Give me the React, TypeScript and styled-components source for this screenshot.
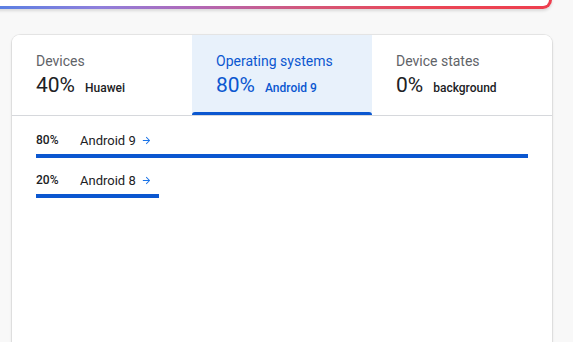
import styled, { createGlobalStyle } from "styled-components";

const GlobalStyle = createGlobalStyle`
  html, body {
    margin: 0;
    padding: 0;
    background: #f8f8f8;
    font-family: Roboto, "Noto Sans", Arial, sans-serif;
    overflow: hidden;
  }
`;

const Page = styled.div`
  width: 540px;
  padding-left: 12px;
`;

const TopCard = styled.div`
  margin-top: -20px;
  margin-left: -40px;
  height: 26px;
  border: 3px solid transparent;
  border-top: none;
  border-left: none;
  border-radius: 0 0 9px 0;
  background: linear-gradient(#fff, #fff) padding-box,
    linear-gradient(90deg, #4c7fe4 0%, #8f7fdc 22%, #b068b8 38%, #d45678 58%, #ea4656 78%, #ee3e4e 100%) border-box;
  box-shadow: 0 2px 3px rgba(0, 0, 0, 0.12);
`;

const Card = styled.div`
  margin-top: 26px;
  min-height: 330px;
  background: #fff;
  border-radius: 8px;
  box-shadow: 0 0 0 1px rgba(0, 0, 0, 0.06), 0 1px 3px rgba(0, 0, 0, 0.14);
  overflow: hidden;
`;

const Tabs = styled.div`
  display: grid;
  grid-template-columns: repeat(3, 1fr);
  border-bottom: 1px solid #d6d8dc;
`;

const Tab = styled.div<{ $active?: boolean }>`
  position: relative;
  padding: 16px 24px 13px;
  background: ${(p) => (p.$active ? "#e8f1fb" : "#fff")};
  color: ${(p) => (p.$active ? "#0b57d0" : "#202124")};
  &::after {
    content: "";
    display: ${(p) => (p.$active ? "block" : "none")};
    position: absolute;
    left: 0;
    right: 0;
    bottom: 0;
    height: 3px;
    border-radius: 3px 3px 0 0;
    background: #0b57d0;
  }
`;

const TabLabel = styled.div<{ $active?: boolean }>`
  font-size: 14px;
  line-height: 20px;
  color: ${(p) => (p.$active ? "#0b57d0" : "#5f6368")};
`;

const TabValue = styled.div`
  display: flex;
  align-items: baseline;
  gap: 10px;
  line-height: 28px;
`;

const Big = styled.span`
  font-size: 21px;
`;

const Small = styled.span`
  font-size: 12px;
  font-weight: 500;
`;

const List = styled.div`
  padding: 14px 24px;
`;

const Row = styled.div`
  display: flex;
  flex-direction: column;
  gap: 4px;
  margin-bottom: 12px;
`;

const RowText = styled.div`
  display: flex;
  align-items: center;
  height: 20px;
  color: #202124;
`;

const Pct = styled.span`
  width: 44px;
  font-size: 12px;
  font-weight: 500;
`;

const Name = styled.span`
  font-size: 13px;
  display: flex;
  align-items: center;
  gap: 5px;
`;

const Bar = styled.div`
  height: 4px;
  background: #0b57d0;
`;

const Arrow = () => (
  <svg width="11" height="11" viewBox="0 0 24 24">
    <path d="M12 4l-1.41 1.41L16.17 11H4v2h12.17l-5.58 5.59L12 20l8-8z" fill="#1a73e8" />
  </svg>
);

const tabs = [
  { label: "Devices", value: "40%", sub: "Huawei" },
  { label: "Operating systems", value: "80%", sub: "Android 9", active: true },
  { label: "Device states", value: "0%", sub: "background" },
];

const rows = [
  { pct: 80, name: "Android 9" },
  { pct: 20, name: "Android 8" },
];

export default function App() {
  const max = Math.max(...rows.map((r) => r.pct));
  return (
    <Page>
      <GlobalStyle />
      <TopCard />
      <Card>
        <Tabs>
          {tabs.map((t) => (
            <Tab key={t.label} $active={t.active}>
              <TabLabel $active={t.active}>{t.label}</TabLabel>
              <TabValue>
                <Big>{t.value}</Big>
                <Small>{t.sub}</Small>
              </TabValue>
            </Tab>
          ))}
        </Tabs>
        <List>
          {rows.map((r) => (
            <Row key={r.name}>
              <RowText>
                <Pct>{r.pct}%</Pct>
                <Name>
                  {r.name}
                  <Arrow />
                </Name>
              </RowText>
              <Bar style={{ width: `${(r.pct / max) * 100}%` }} />
            </Row>
          ))}
        </List>
      </Card>
    </Page>
  );
}
